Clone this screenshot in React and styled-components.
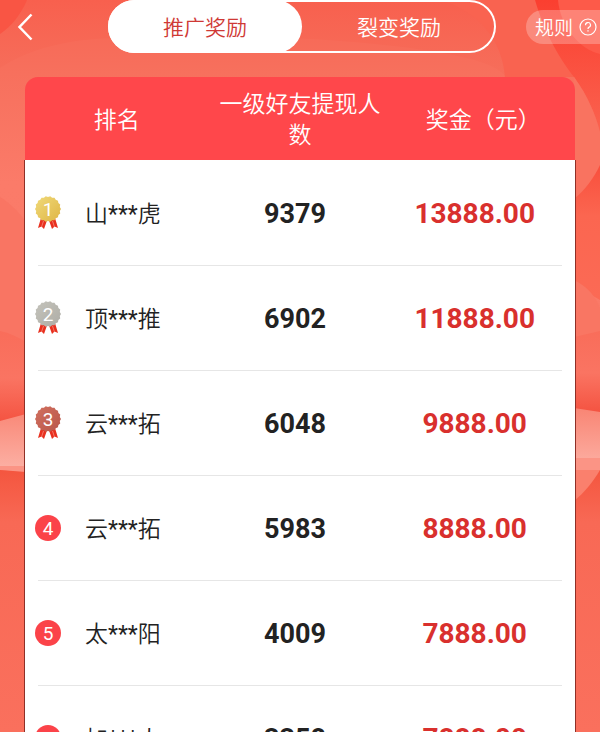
import React from 'react';
import styled, { createGlobalStyle } from 'styled-components';

const rows = [
  { rank: 1, name: '山***虎', friends: '9379', amount: '13888.00' },
  { rank: 2, name: '顶***推', friends: '6902', amount: '11888.00' },
  { rank: 3, name: '云***拓', friends: '6048', amount: '9888.00' },
  { rank: 4, name: '云***拓', friends: '5983', amount: '8888.00' },
  { rank: 5, name: '太***阳', friends: '4009', amount: '7888.00' },
  { rank: 6, name: '加***人', friends: '3358', amount: '7888.00' },
];

const medals = {
  1: { from: '#f0da7a', to: '#dfb544' },
  2: { from: '#c4c3bb', to: '#aeada6' },
  3: { from: '#d1705f', to: '#b9574a' },
};

const Backdrop = () => (
  <BackdropSvg viewBox="0 0 600 732" preserveAspectRatio="none" aria-hidden="true">
    <defs>
      <linearGradient id="sky" x1="0" y1="0" x2="0" y2="1">
        <stop offset="0" stopColor="#f76553" />
        <stop offset="0.1" stopColor="#f7705d" />
        <stop offset="0.25" stopColor="#fb7b69" />
        <stop offset="0.45" stopColor="#fa7a68" />
      </linearGradient>
      <linearGradient id="arc" x1="0" y1="0" x2="0" y2="1">
        <stop offset="0" stopColor="#f8604e" />
        <stop offset="1" stopColor="#f66e5b" />
      </linearGradient>
      <linearGradient id="hill" x1="0" y1="0" x2="0" y2="1">
        <stop offset="0" stopColor="#f96d5a" />
        <stop offset="0.5" stopColor="#fa7462" />
        <stop offset="1" stopColor="#f4513f" />
      </linearGradient>
      <linearGradient id="band" x1="0" y1="0" x2="0" y2="1">
        <stop offset="0" stopColor="#f98574" />
        <stop offset="1" stopColor="#fcb1a5" />
      </linearGradient>
      <linearGradient id="ground" x1="0" y1="0" x2="0" y2="1">
        <stop offset="0" stopColor="#f4563f" />
        <stop offset="0.2" stopColor="#f86955" />
        <stop offset="1" stopColor="#fa705d" />
      </linearGradient>
      <linearGradient id="edge" x1="0" y1="0" x2="0" y2="1">
        <stop offset="0" stopColor="#f84d3b" />
        <stop offset="0.4" stopColor="#fb6650" />
        <stop offset="1" stopColor="#fb6a55" />
      </linearGradient>
      <linearGradient id="swoop" x1="0" y1="0" x2="0" y2="1">
        <stop offset="0" stopColor="#fb3f30" />
        <stop offset="1" stopColor="#fa624f" />
      </linearGradient>
    </defs>
    <rect width="600" height="732" fill="url(#sky)" />
    <path d="M0 0H600V75H504C480 40 200 30 115 38C70 39 30 48 0 68Z" fill="url(#arc)" />
    <path d="M0 0H27C21 14 12 26 0 34Z" fill="#f95544" />
    <path d="M0 197C10 203 18 211 26 222V342H0Z" fill="#f97563" />
    <path d="M440 0C480 12 502 40 505 77H576V170H600V0Z" fill="#f96350" />
    <path d="M574 160H600V300L574 285Z" fill="url(#edge)" />
    <path d="M535 0C545 35 562 62 574 77C588 96 596 116 600 132V0Z" fill="url(#swoop)" />
    <path d="M558 0C560 26 580 50 600 54V0Z" fill="#fd5a49" />
    <path d="M574 77C588 96 596 116 600 132V165C594 178 585 190 574 199Z" fill="#f97360" />
    <path d="M574 280C588 287 596 297 600 308V412H574Z" fill="#f97663" />
    <path d="M574 337L600 331V415H574Z" fill="url(#hill)" />
    <path d="M0 331C10 333 18 337 26 342V425H0Z" fill="url(#hill)" />
    <path d="M0 421L26 414L574 408L600 412V470H0Z" fill="url(#band)" />
    <path d="M0 466H26V473L0 470ZM574 458H600V470H574Z" fill="#fb9485" />
    <path d="M0 470L26 472L574 470H600V732H0Z" fill="url(#ground)" />
    <path d="M574 470H600C593 482 584 493 574 501Z" fill="#fa806d" />
  </BackdropSvg>
);

const Medal = ({ rank }) => {
  const { from, to } = medals[rank];
  const points = Array.from({ length: 36 }, (_, i) => {
    const r = i % 2 ? 12 : 13;
    const a = (i * Math.PI) / 18;
    return `${(13 + r * Math.cos(a)).toFixed(2)},${(13 + r * Math.sin(a)).toFixed(2)}`;
  }).join(' ');
  return (
    <MedalSvg viewBox="0 0 26 34" role="img" aria-label={`第${rank}名`}>
      <defs>
        <linearGradient id={`medal${rank}`} x1="0" y1="0" x2="1" y2="1">
          <stop offset="0" stopColor={from} />
          <stop offset="1" stopColor={to} />
        </linearGradient>
      </defs>
      <path d="M6 22L3 32L6.5 30.5L9 33L12.5 23Z" fill="#e8301f" />
      <path d="M20 22L23 32L19.5 30.5L17 33L13.5 23Z" fill="#e8301f" />
      <path d="M8.5 25L6.5 31M17.5 25L19.5 31" stroke="#f98a7c" strokeWidth="0.8" />
      <polygon points={points} fill={`url(#medal${rank})`} />
      <text x="13" y="20" textAnchor="middle" fontSize="19" fill="#fff">{rank}</text>
    </MedalSvg>
  );
};

const App = () => {
  const [tab, setTab] = React.useState(0);
  return (
    <Page>
      <GlobalStyle />
      <Backdrop />
      <TopBar>
        <BackButton aria-label="返回">
          <svg width="16" height="28" viewBox="0 0 16 28" fill="none" aria-hidden="true">
            <path d="M14.5 1.5L2.5 14L14.5 26.5" stroke="#fff" strokeWidth="2.5" />
          </svg>
        </BackButton>
        <Tabs>
          {['推广奖励', '裂变奖励'].map((label, i) => (
            <Tab key={label} $active={tab === i} aria-pressed={tab === i} onClick={() => setTab(i)}>
              {label}
            </Tab>
          ))}
        </Tabs>
        <Rules>
          规则
          <svg width="18" height="18" viewBox="0 0 18 18" fill="none" stroke="#fff" aria-hidden="true">
            <circle cx="9" cy="9" r="8" strokeWidth="1.2" />
            <path d="M6.5 7.2A2.5 2.5 0 1 1 9.8 9.4Q9 9.8 9 11" strokeWidth="1.2" />
            <path d="M9 12.3V13.6" strokeWidth="1.3" />
          </svg>
        </Rules>
      </TopBar>
      <Board>
        <Head>
          <HeadRow>
            <HeadCell scope="col">排名</HeadCell>
            <HeadCell scope="col">一级好友提现人数</HeadCell>
            <HeadCell scope="col">奖金（元）</HeadCell>
          </HeadRow>
        </Head>
        <Body>
          {rows.map(({ rank, name, friends, amount }) => (
            <Row key={rank}>
              <NameCell>
                {medals[rank] ? <Medal rank={rank} /> : <Rank>{rank}</Rank>}
                <Name>{name}</Name>
              </NameCell>
              <CountCell>{friends}</CountCell>
              <AmountCell>{amount}</AmountCell>
            </Row>
          ))}
        </Body>
      </Board>
    </Page>
  );
};

const GlobalStyle = createGlobalStyle`
  * {
    box-sizing: border-box;
  }

  body {
    margin: 0;
    font-family: Roboto, "Noto Sans CJK SC DemiLight", "Noto Sans CJK SC", sans-serif;
  }

  button {
    border: 0;
    padding: 0;
    background: none;
    color: #fff;
    font-family: inherit;
    cursor: pointer;
  }
`;

const Page = styled.div`
  position: relative;
  isolation: isolate;
  height: 100vh;
  overflow: hidden auto;
  scrollbar-width: none;
`;

const BackdropSvg = styled.svg`
  position: absolute;
  inset: 0;
  z-index: -1;
  width: 100%;
  height: 100%;
`;

const TopBar = styled.header`
  display: grid;
  grid-template-columns: 108px 1fr 104px;
  align-items: center;
  height: 53px;
`;

const BackButton = styled.button`
  display: flex;
  justify-self: start;
  padding-left: 17px;
`;

const Tabs = styled.div`
  display: flex;
  height: 53px;
  border-radius: 27px;
  box-shadow: inset 0 0 0 2px #fff;
`;

const Tab = styled.button`
  flex: 1;
  padding-bottom: 2px;
  border-radius: 27px;
  background: ${props => (props.$active ? '#fff' : 'transparent')};
  color: ${props => (props.$active ? '#cf3935' : '#fff')};
  font-size: 21px;
`;

const Rules = styled.button`
  display: flex;
  justify-self: end;
  align-items: center;
  gap: 6px;
  height: 34px;
  padding: 0 3px 0 9px;
  border-radius: 17px 0 0 17px;
  background: rgba(255, 255, 255, 0.25);
  font-size: 19px;
`;

const Board = styled.table`
  display: block;
  margin: 24px 25px 0;
`;

const Head = styled.thead`
  display: block;
`;

const HeadRow = styled.tr`
  display: grid;
  grid-template-columns: repeat(3, 1fr);
  align-items: center;
  height: 83px;
  border-radius: 13px 13px 0 0;
  background: #ff474b;
`;

const HeadCell = styled.th`
  padding: 3px 10px 0;
  color: #fff;
  font-size: 23px;
  font-weight: 400;
  line-height: 31px;
`;

const Body = styled.tbody`
  display: block;
  padding: 1px 13px 0;
  background: #fff;
  box-shadow: 0 1px 0 1px #8f3027;
`;

const Row = styled.tr`
  display: grid;
  grid-template-columns: repeat(3, 1fr);
  align-items: center;
  height: 105px;
  border-bottom: 1px solid #e6e6e6;
`;

const NameCell = styled.td`
  display: flex;
  align-items: center;
  gap: 24px;
  margin-left: -3px;
  padding: 0;
`;

const Name = styled.span`
  padding-bottom: 2px;
  color: #222;
  font-size: 23px;
`;

const CountCell = styled.td`
  padding: 2px 10px 0 0;
  color: #222;
  font-size: 27px;
  font-weight: 700;
  text-align: center;
`;

const AmountCell = styled(CountCell)`
  padding: 1px 0 0;
  color: #d9302d;
  font-size: 28px;
`;

const MedalSvg = styled.svg`
  flex: none;
  width: 26px;
  height: 34px;
`;

const Rank = styled.span`
  display: flex;
  flex: none;
  align-items: center;
  justify-content: center;
  width: 26px;
  height: 26px;
  border-radius: 50%;
  background: #fb4349;
  color: #fff;
  font-size: 19px;
`;

export default App;
